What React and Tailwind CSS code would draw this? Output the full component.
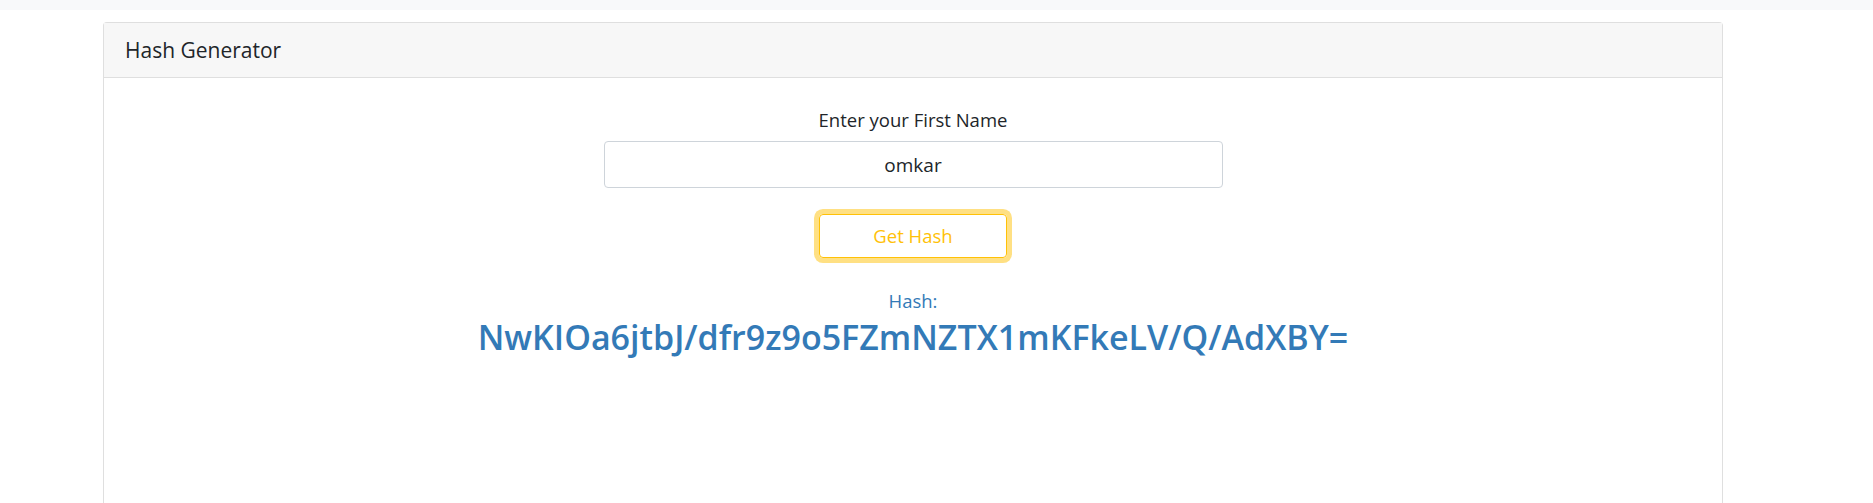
import React, { useState } from 'react';

const App = () => {
  const [name, setName] = useState('omkar');
  const hash = 'NwKIOa6jtbJ/dfr9z9o5FZmNZTX1mKFkeLV/Q/AdXBY=';

  return (
    <div className="min-h-[503px] bg-white font-['Open_Sans',sans-serif] text-[#212529]">
      <div className="h-[10px] bg-[#f8f9fa]" />
      <div className="mt-[12px] ml-[103px] w-[1620px] h-[481px] border border-[#dfdfdf] border-b-0 rounded-t-[4px] flex flex-col">
        <div className="h-[55px] bg-[#f7f7f7] border-b border-[#dfdfdf] flex items-center px-[21px]">
          <h5 className="text-[21px] leading-none">Hash Generator</h5>
        </div>
        <div className="flex flex-col items-center pt-[28px]">
          <label className="text-[18.5px] leading-[28px]">Enter your First Name</label>
          <input
            value={name}
            onChange={(e) => setName(e.target.value)}
            className="mt-[7px] w-[619px] h-[47px] border border-[#ced4da] rounded-[4px] text-center text-[19px] outline-none"
          />
          <button className="mt-[26px] w-[188px] h-[44px] border border-[#ffc107] rounded-[4px] text-[#ffc107] text-[18.5px] shadow-[0_0_0_5px_rgba(255,193,7,0.5)]">
            Get Hash
          </button>
          <div className="mt-[29px] text-[18.5px] leading-[28px] text-[#337ab7]">Hash:</div>
          <h2 className="text-[34px] leading-[44px] font-semibold text-[#337ab7]">{hash}</h2>
        </div>
      </div>
    </div>
  );
};

export default App;
